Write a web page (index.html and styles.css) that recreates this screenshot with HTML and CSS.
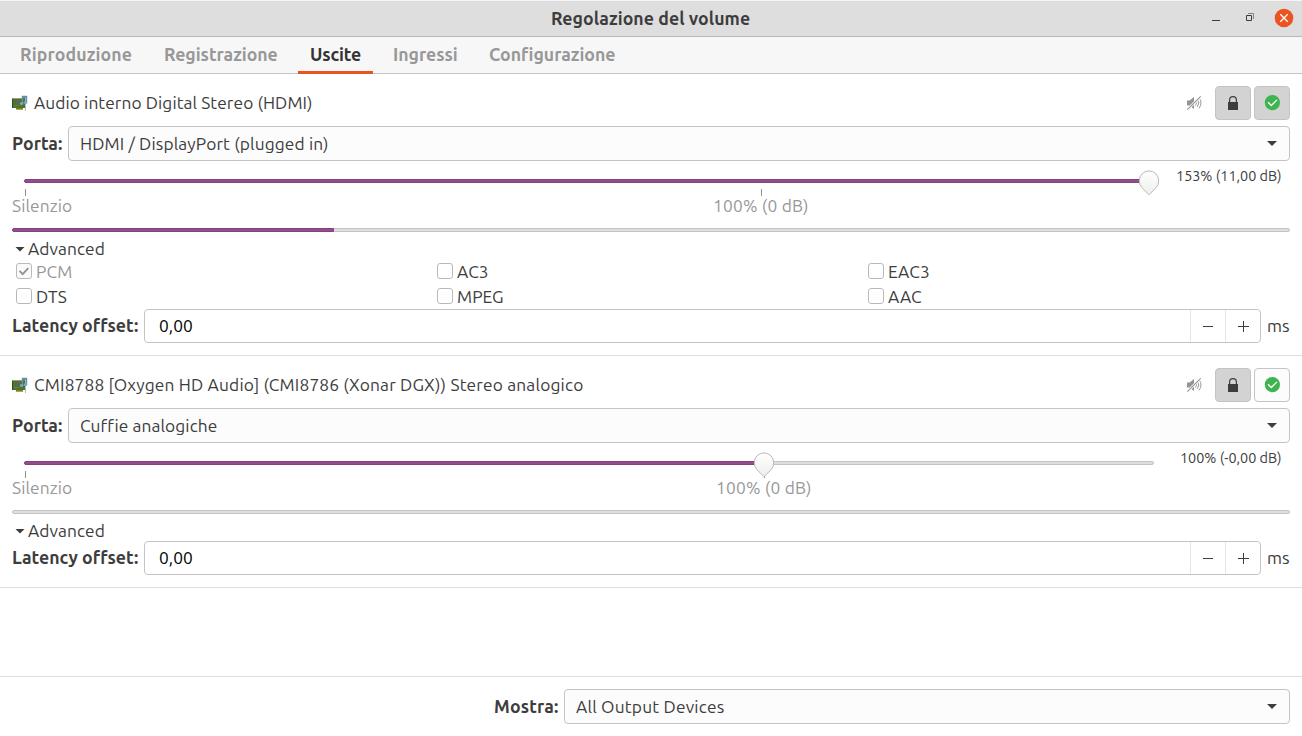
FILE: index.html
```html
<!DOCTYPE html>
<html lang="it">
<head>
  <meta charset="utf-8">
  <title>Regolazione del volume</title>
  <link rel="stylesheet" href="styles.css">
</head>
<body>
  <!-- Shared icons -->
  <svg class="sprite" width="0" height="0">
    <linearGradient id="thumb-shade" x1="0" y1="0" x2="0" y2="1">
      <stop offset="0" stop-color="#fff"/>
      <stop offset="1" stop-color="#eeeeec"/>
    </linearGradient>
    <symbol id="icon-card" viewBox="0 0 16 16">
      <path d="M13 4h1v12h-1z" fill="#b5bbb5"/>
      <path d="M0 3h13v10H0z" fill="#4b752f"/>
      <path d="M0 3h10v1H0z" fill="#8ba570"/>
      <path d="M0 4h1v9H0z" fill="#30501f"/>
      <path d="M3 5h5v3H3z" fill="#655e62"/>
      <path d="M2 10h5v1H2z" fill="#608440"/>
      <path d="M4 13h7v1.7H4z" fill="#85801f"/>
      <path d="M10.5 8V1.5h4V7M10.5 2.5h4" fill="none" stroke="#648eb0" stroke-width="1.4"/>
      <ellipse cx="9.6" cy="8.6" rx="1.8" ry="1.5" fill="#7da6c2"/>
      <ellipse cx="13.6" cy="7.6" rx="1.8" ry="1.5" fill="#7da6c2"/>
    </symbol>
    <symbol id="icon-mute" viewBox="0 0 16 16">
      <path d="M1 5.5h2.5L8 2v12L3.5 10.5H1z" fill="#929595"/>
      <path d="M9.5 5.5q2 2.5 0 5M11.3 4.2q3 3.8 0 7.6M13 2.7q4 5.3 0 10.6" fill="none" stroke="#999" stroke-width="1"/>
      <path d="M1.3 14.7L14.7 1.3" stroke="#fff" stroke-width="2.6"/>
      <path d="M1.3 14.7L14.7 1.3" stroke="#929595" stroke-width="1.1"/>
    </symbol>
    <symbol id="icon-lock" viewBox="0 0 16 16">
      <path d="M3 7h10v8H3z" fill="#3d3d3d"/>
      <path d="M4.6 7.5V5a3.4 3.4 0 0 1 6.8 0v2.5" fill="none" stroke="#3d3d3d" stroke-width="1.2"/>
    </symbol>
    <symbol id="icon-ok" viewBox="0 0 16 16">
      <circle cx="8.4" cy="7.7" r="7.6" fill="#3eb34f"/>
      <path d="M4 7.3l3.3 3.2 5.7-5.6" fill="none" stroke="#fff" stroke-width="1.3"/>
    </symbol>
    <symbol id="icon-thumb" viewBox="0 0 22 26">
      <path d="M11 24.8L3.9 17.6A9.7 9.7 0 0 1 1.3 10.6a9.7 9.7 0 0 1 19.4 0 9.7 9.7 0 0 1-2.6 7z" fill="url(#thumb-shade)" stroke="#b9b9b7" stroke-width="1"/>
    </symbol>
  </svg>

  <div class="titlebar">
    <h1>Regolazione del volume</h1>
    <div class="window-buttons">
      <svg width="10" height="20"><path d="M1 12.5h8" stroke="#3d3d3d"/></svg>
      <svg width="10" height="20"><path d="M1.5 7.5h5v5h-5z" fill="none" stroke="#3d3d3d"/><path d="M3 5.5h5.5V11" fill="none" stroke="#858585"/></svg>
      <svg width="20" height="20"><circle cx="10" cy="10" r="9.3" fill="#e95420"/><path d="M6.3 6.3l7.4 7.4M13.7 6.3l-7.4 7.4" stroke="#fff" stroke-width="1.3"/></svg>
    </div>
  </div>

  <div class="tabs">
    <a class="tab playback">Riproduzione</a>
    <a class="tab recording">Registrazione</a>
    <a class="tab output active">Uscite</a>
    <a class="tab input">Ingressi</a>
    <a class="tab config">Configurazione</a>
  </div>

  <div class="devices">
    <div class="device">
      <div class="device-header">
        <svg class="card-icon"><use href="#icon-card"/></svg>
        <span class="device-name">Audio interno Digital Stereo (HDMI)</span>
        <svg class="mute-icon"><use href="#icon-mute"/></svg>
        <button class="toggle on"><svg><use href="#icon-lock"/></svg></button>
        <button class="toggle on"><svg><use href="#icon-ok"/></svg></button>
      </div>
      <div class="row port-row">
        <span class="label">Porta:</span>
        <div class="combo"><span class="hdmi">HDMI / DisplayPort (plugged in)</span><i class="arrow"></i></div>
      </div>
      <div class="volume">
        <div class="scale">
          <div class="trough"><div class="fill full"></div></div>
          <svg class="thumb at-max"><use href="#icon-thumb"/></svg>
          <i class="tick"></i>
          <i class="tick mid"></i>
          <span class="mark">Silenzio</span>
          <span class="mark base">100% (0 dB)</span>
        </div>
        <span class="value">153% (11,00 dB)</span>
      </div>
      <div class="peak"><div class="level"></div></div>
      <div class="expander"><i class="arrow"></i><span>Advanced</span></div>
      <div class="formats">
        <label class="disabled"><i class="check"><svg width="14" height="14"><path d="M2.5 6.8l3.2 3.4 5.6-6" fill="none" stroke="#929292" stroke-width="1.8"/></svg></i>PCM</label>
        <label><i class="check"></i>AC3</label>
        <label><i class="check"></i>EAC3</label>
        <label><i class="check"></i>DTS</label>
        <label><i class="check"></i>MPEG</label>
        <label><i class="check"></i>AAC</label>
      </div>
      <div class="row latency-row">
        <span class="label">Latency offset:</span>
        <div class="spin">
          <span class="number">0,00</span>
          <button><svg width="12" height="12"><path d="M1 6.5h10" stroke="#3d3d3d"/></svg></button>
          <button><svg width="12" height="12"><path d="M1 6.5h11M6.5 1v11" stroke="#3d3d3d"/></svg></button>
        </div>
        <span class="unit">ms</span>
      </div>
    </div>

    <div class="device">
      <div class="device-header">
        <svg class="card-icon"><use href="#icon-card"/></svg>
        <span class="device-name long">CMI8788 [Oxygen HD Audio] (CMI8786 (Xonar DGX)) Stereo analogico</span>
        <svg class="mute-icon"><use href="#icon-mute"/></svg>
        <button class="toggle on"><svg><use href="#icon-lock"/></svg></button>
        <button class="toggle"><svg><use href="#icon-ok"/></svg></button>
      </div>
      <div class="row port-row">
        <span class="label">Porta:</span>
        <div class="combo"><span>Cuffie analogiche</span><i class="arrow"></i></div>
      </div>
      <div class="volume">
        <div class="scale">
          <div class="trough"><div class="fill normal"></div></div>
          <i class="tick"></i>
          <i class="tick under"></i>
          <svg class="thumb at-base"><use href="#icon-thumb"/></svg>
          <span class="mark">Silenzio</span>
          <span class="mark base second">100% (0 dB)</span>
        </div>
        <span class="value">100% (-0,00 dB)</span>
      </div>
      <div class="peak"></div>
      <div class="expander"><i class="arrow"></i><span>Advanced</span></div>
      <div class="row latency-row">
        <span class="label">Latency offset:</span>
        <div class="spin">
          <span class="number">0,00</span>
          <button><svg width="12" height="12"><path d="M1 6.5h10" stroke="#3d3d3d"/></svg></button>
          <button><svg width="12" height="12"><path d="M1 6.5h11M6.5 1v11" stroke="#3d3d3d"/></svg></button>
        </div>
        <span class="unit">ms</span>
      </div>
    </div>
  </div>

  <div class="footer">
    <span class="label">Mostra:</span>
    <div class="combo"><span class="show">All Output Devices</span><i class="arrow"></i></div>
  </div>
</body>
</html>
```
FILE: styles.css
```css
* {
  box-sizing: border-box;
}

body {
  font-family: Ubuntu, "Noto Sans", sans-serif;
  font-size: 17.33px;
  letter-spacing: 0.08px;
  line-height: 20px;
  color: #3d3d3d;
  background-color: #fff;
  margin: 0;
  height: 736px;
  display: flex;
  flex-direction: column;
  overflow: hidden;
  white-space: nowrap;
}

svg {
  display: block;
  flex: none;
}

.sprite {
  position: absolute;
}

.titlebar {
  height: 37px;
  display: grid;
  grid-template-columns: 1fr auto 1fr;
  align-items: center;
  background-color: #dedede;
  border-top: 1px solid #f5f5f5;
  border-bottom: 1px solid #b8b8b8;
}

.titlebar h1 {
  grid-column: 2;
  margin: 0;
  padding-top: 1px;
  font-size: 17.7px;
  width: 200px;
  letter-spacing: 0.05px;
}

.window-buttons {
  display: flex;
  justify-content: flex-end;
  gap: 24px;
  padding-right: 8px;
  padding-bottom: 1px;
}

.window-buttons svg:nth-child(2) {
  margin-right: -5px;
}

.tabs {
  height: 37px;
  display: flex;
  gap: 8px;
  padding-left: 8px;
  background-color: #f7f7f7;
  border-bottom: 1px solid #c4c4c4;
}

.tab {
  height: 37px;
  padding: 8px 12px 0;
  font-size: 17.7px;
  font-weight: bold;
  letter-spacing: -0.04px;
  color: #989898;
  border-bottom: 3px solid transparent;
}

.tab.active {
  color: #333;
  letter-spacing: -0.12px;
  border-bottom-color: #e95420;
}

.playback {
  width: 136px;
  letter-spacing: 0.12px;
}

.recording { width: 138px; }
.output { width: 75px; }
.input { width: 88px; }
.config { width: 150px; }

.devices {
  flex: 1;
}

.device {
  padding: 12px 12px 12px;
  border-bottom: 1px solid #dedede;
}

.device-header {
  height: 34px;
  display: flex;
  align-items: center;
}

.card-icon {
  width: 16px;
  height: 16px;
  margin-right: 6px;
}

.device-name {
  flex: 1;
}

.device-name.long {
  letter-spacing: 0.17px;
}

.mute-icon {
  width: 16px;
  height: 16px;
  margin-right: 13px;
}

.toggle {
  width: 36px;
  height: 34px;
  padding: 0;
  display: flex;
  align-items: center;
  justify-content: center;
  background-color: #fcfcfc;
  border: 1px solid #c4c4c4;
  border-radius: 4px;
}

.toggle + .toggle {
  margin-left: 3px;
}

.toggle.on {
  background-color: #d3d3d3;
}

.toggle svg {
  width: 16px;
  height: 16px;
}

.row {
  display: flex;
  align-items: center;
}

.label {
  font-size: 17.7px;
  font-weight: bold;
  letter-spacing: 0.04px;
}

.port-row {
  height: 35px;
  margin-top: 6px;
}

.port-row .label {
  width: 56px;
}

.combo {
  flex: 1;
  height: 35px;
  display: flex;
  align-items: center;
  justify-content: space-between;
  padding: 0 12px 0 11px;
  background-color: #fcfcfc;
  border: 1px solid #c4c4c4;
  border-radius: 4px;
}

.hdmi {
  letter-spacing: 0.13px;
}

.arrow {
  width: 10px;
  height: 5px;
  background-color: #3d3d3d;
  clip-path: polygon(0 0, 100% 0, 50% 100%);
}

.volume {
  height: 67px;
  display: flex;
  padding-left: 12px;
}

.scale {
  position: relative;
  width: 1130px;
  padding-top: 18px;
}

.trough {
  height: 4px;
  background-color: #dedede;
  border: 1px solid #c4c4c4;
  border-radius: 2px;
}

.fill {
  height: 4px;
  margin: -1px;
  background-color: #924d8b;
  border: 1px solid #864180;
  border-radius: 2px;
}

.fill.full { width: 1125px; }
.fill.normal { width: 740px; }

/* Slider handle and scale marks lie over the trough */
.thumb {
  position: absolute;
  top: 9px;
  width: 22px;
  height: 26px;
}

.at-max { left: 1114px; }
.at-base { left: 729px; }

.tick {
  position: absolute;
  left: 1px;
  top: 28px;
  width: 1px;
  height: 7px;
  background-color: #929292;
}

.tick.mid {
  left: 737px;
}

.tick.under {
  left: 740px;
}

.mark {
  position: absolute;
  top: 35px;
  left: -12px;
  color: #989898;
}

.mark.base {
  left: 689px;
  letter-spacing: 0.2px;
}

.mark.second {
  left: 692px;
}

.value {
  flex: 1;
  padding: 5px 8.5px 0 0;
  font-size: 14.4px;
  letter-spacing: 0;
  text-align: right;
}

.peak {
  height: 4px;
  background-color: #dedede;
  border: 1px solid #c4c4c4;
  border-radius: 2px;
}

.level {
  width: 322px;
  height: 4px;
  margin: -1px;
  background-color: #924d8b;
  border: 1px solid #864180;
  border-radius: 2px 0 0 2px;
}

.expander {
  height: 20px;
  display: flex;
  align-items: center;
  gap: 3px;
  margin-top: 7px;
  padding-left: 3px;
}

.formats {
  display: grid;
  grid-template-columns: 421px 431px 1fr;
  grid-auto-rows: 25px;
  padding-left: 4px;
}

.formats label {
  display: flex;
  align-items: center;
  gap: 4px;
}

.check {
  width: 16px;
  height: 16px;
  margin-bottom: 2px;
  background-color: #fff;
  border: 1px solid #bababa;
  border-radius: 3px;
}

.disabled {
  color: #989898;
}

.disabled .check {
  background-color: #fafafa;
}

.latency-row {
  height: 34px;
}

.latency-row .label {
  width: 132px;
}

.spin {
  flex: 1;
  height: 34px;
  display: flex;
  border: 1px solid #c4c4c4;
  border-radius: 4px;
}

.number {
  flex: 1;
  padding: 6px 14px;
  color: #000;
}

.spin button {
  width: 35px;
  padding: 0;
  display: flex;
  align-items: center;
  justify-content: center;
  background: none;
  border: 0;
  border-left: 1px solid #e4e4e4;
}

.unit {
  width: 29px;
  padding-left: 6px;
}

.footer {
  height: 60px;
  display: flex;
  padding: 12px 12px 0 494px;
  border-top: 1px solid #dedede;
}

.footer .label {
  width: 70px;
  padding-top: 8px;
  letter-spacing: 0.15px;
}

.show {
  letter-spacing: 0.2px;
}
```
